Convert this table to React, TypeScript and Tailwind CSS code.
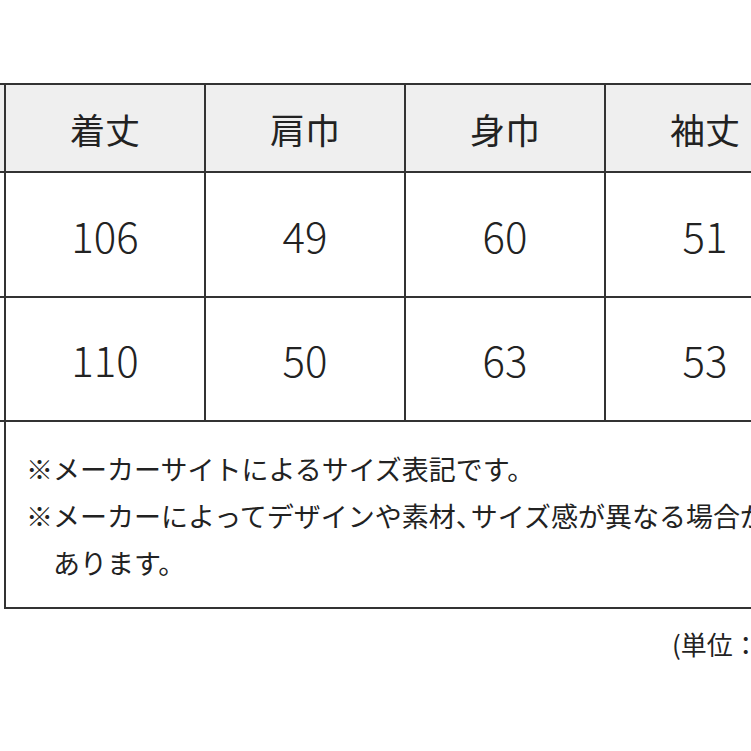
const headers = ["着丈", "肩巾", "身巾", "袖丈"];

const rows = [
  ["106", "49", "60", "51"],
  ["110", "50", "63", "53"],
];

const font = { fontFamily: '"Noto Sans CJK JP", "Noto Sans", sans-serif' };

export default function App() {
  return (
    <div
      className="w-[751px] h-[751px] overflow-hidden bg-white text-[#222]"
      style={font}>
      <div className="pt-[83px] w-[1100px]">
        {/* Header row */}
        <div className="flex h-[90px] border-y-2 border-[#333] bg-[#efefef]">
          <div className="w-[6px] shrink-0 border-r-2 border-[#333]" />
          {headers.map((h) => (
            <div
              key={h}
              className="w-[200px] shrink-0 border-r-2 border-[#333] flex items-center justify-center text-[35px] leading-none">
              {h}
            </div>
          ))}
        </div>

        {/* Data rows */}
        {rows.map((row, i) => (
          <div
            key={i}
            className={
              i === 0
                ? "flex h-[125px] border-b-2 border-[#333]"
                : "flex h-[124px] border-b-2 border-[#333]"
            }>
            <div className="w-[6px] shrink-0 border-r-2 border-[#333]" />
            {row.map((v, j) => (
              <div
                key={j}
                className="w-[200px] shrink-0 border-r-2 border-[#333] flex items-center justify-center text-[42px] font-light leading-none">
                {v}
              </div>
            ))}
          </div>
        ))}

        {/* Notes */}
        <div className="ml-[4px] h-[187px] border-l-2 border-b-2 border-[#333] pl-5 pt-[23px] text-[27px] font-normal leading-[47px] whitespace-nowrap">
          <p>※メーカーサイトによるサイズ表記です。</p>
          <p>
            ※メーカーによってデザインや素材<span className="-mr-[12px]">、</span>サイズ感が異なる場合が
          </p>
          <p className="pl-[27px]">あります。</p>
        </div>

        {/* Unit */}
        <p className="pl-[672px] pt-[22px] text-[26px] font-normal leading-none whitespace-nowrap">
          (単位：cm)
        </p>
      </div>
    </div>
  );
}
